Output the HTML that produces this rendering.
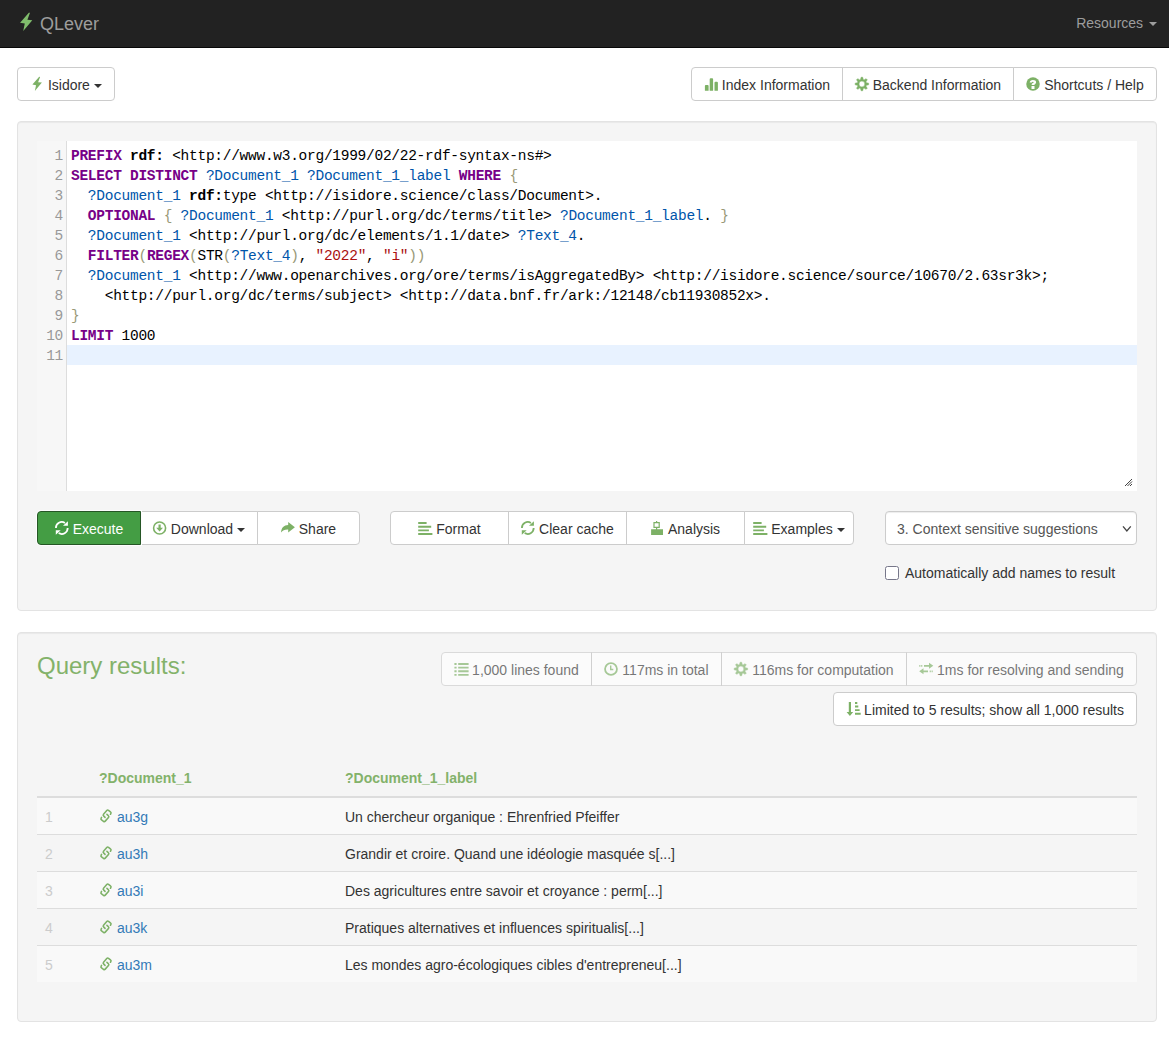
<!DOCTYPE html>
<html>
<head>
<meta charset="utf-8">
<title>QLever</title>
<style>
*{box-sizing:border-box;}
html,body{margin:0;padding:0;}
body{width:1169px;height:1038px;overflow:hidden;background:#fff;color:#333;font-family:"Liberation Sans",sans-serif;font-size:14px;line-height:20px;position:relative;}
.abs{position:absolute;}
.ic{display:inline-block;width:14px;height:14px;vertical-align:-1px;fill:currentColor;overflow:visible;}
/* navbar */
#nav{left:0;top:0;width:1169px;height:48px;background:#222;border-bottom:1px solid #080808;}
#brand{left:17px;top:14px;font-size:18px;line-height:20px;color:#9d9d9d;white-space:nowrap;}
#res{right:12px;top:13px;color:#9d9d9d;white-space:nowrap;}
.caret{display:inline-block;width:0;height:0;margin-left:2px;vertical-align:middle;border-top:4px solid;border-right:4px solid transparent;border-left:4px solid transparent;}
/* buttons */
.btn{display:inline-block;height:34px;padding:7px 12px 5px;border:1px solid #ccc;background:#fff;color:#333;font-size:14px;line-height:20px;text-align:center;white-space:nowrap;border-radius:4px;vertical-align:top;}
.grp{white-space:nowrap;font-size:0;}
.grp .btn{border-radius:0;margin-left:-1px;}
.grp .btn:first-child{border-radius:4px 0 0 4px;margin-left:0;}
.grp .btn:last-child{border-radius:0 4px 4px 0;}
.well{background:#f5f5f5;border:1px solid #e3e3e3;border-radius:4px;box-shadow:inset 0 1px 1px rgba(0,0,0,.05);}

.ic{color:#7db166;}
symbol{overflow:visible;}
.btn .caret{margin-left:0;}
.btn-success{background:#449d44;border-color:#255625;color:#fff;position:relative;z-index:2;box-shadow:0 0 0 1px #fdfdfd;}
.btn-success .ic{color:#fff;fill:#fff;}
.dis .btn{opacity:.65;}
/* editor */
#ed{left:37px;top:141px;width:1100px;height:350px;background:#fff;overflow:hidden;}
#gut{left:0;top:0;width:30px;height:350px;background:#f7f7f7;border-right:1px solid #ddd;}
#act{left:30px;top:204px;width:1070px;height:20px;background:#e8f2ff;}
#code,#lnum{font-family:"Liberation Mono",monospace;font-size:14.5px;line-height:20px;white-space:pre;margin:0;letter-spacing:-0.272px;}
#code{left:34px;top:5px;color:#000;}
#lnum{left:0;top:5px;width:26px;text-align:right;color:#999;}
.k{color:#708;font-weight:bold;}
.p{font-weight:bold;color:#000;}
.v{color:#05a;}
.b{color:#997;}
.s{color:#a11;}
/* select, checkbox */
#sel{left:885px;top:511px;width:252px;height:34px;border:1px solid #ccc;border-radius:4px;background:#fff;color:#555;padding:7px 11px 5px;box-shadow:inset 0 1px 1px rgba(0,0,0,.075);}
#cb{left:885.3px;top:566px;width:13.6px;height:13.6px;border:1px solid #77778a;border-radius:2.5px;background:#fff;}
/* table */
#tbl{left:37px;top:760px;width:1100px;border-collapse:separate;border-spacing:0;table-layout:fixed;}
#tbl th{text-align:left;padding:8px;height:38px;line-height:20px;border-bottom:2px solid #ddd;color:#83b26a;font-weight:bold;vertical-align:bottom;}
#tbl td{padding:9px 8px 7px;height:37px;line-height:20px;border-top:1px solid #ddd;vertical-align:top;white-space:nowrap;}
#tbl tr.o td{background:#f9f9f9;}
#tbl tr.f td{border-top:0;height:36px;}
#tbl td.n{color:#ccc;}
#tbl a{color:#337ab7;text-decoration:none;}
h3{margin:0;font-size:24px;line-height:26px;font-weight:normal;color:#83b26a;}
</style>
</head>
<body>
<svg width="0" height="0" style="position:absolute">
<defs>
<symbol id="i-flash" viewBox="0 0 14 14"><path d="M9.2 -0.2 L10.1 -0.1 L8.1 5.3 L11.9 5.55 L4.85 14 L6.05 8.25 L2.4 7.55 Z"/></symbol>
<symbol id="i-stats" viewBox="0 0 14 14"><path d="M0.9 13.8 V9 Q0.9 8.1 1.8 8.1 H3.7 Q4.6 8.1 4.6 9 V13.8 Z M5.7 13.8 V2.2 Q5.7 1.2 6.7 1.2 H8.1 Q9.1 1.2 9.1 2.2 V13.8 Z M10.5 13.8 V5.8 Q10.5 4.8 11.5 4.8 H12.9 Q13.9 4.8 13.9 5.8 V13.8 Z"/></symbol>
<symbol id="i-cog" viewBox="0 0 14 14"><path fill-rule="evenodd" stroke="currentColor" stroke-width="0.5" stroke-linejoin="round" d="M5.54 2.61 L6.09 0.25 L7.71 0.25 L8.26 2.61 L9.05 2.93 L11.10 1.65 L12.25 2.80 L10.97 4.85 L11.29 5.64 L13.65 6.19 L13.65 7.81 L11.29 8.36 L10.97 9.15 L12.25 11.20 L11.10 12.35 L9.05 11.07 L8.26 11.39 L7.71 13.75 L6.09 13.75 L5.54 11.39 L4.75 11.07 L2.70 12.35 L1.55 11.20 L2.83 9.15 L2.51 8.36 L0.15 7.81 L0.15 6.19 L2.51 5.64 L2.83 4.85 L1.55 2.80 L2.70 1.65 L4.75 2.93 Z M4.00 7.00 a2.90 2.90 0 1 0 5.80 0 a2.90 2.90 0 1 0 -5.80 0 Z"/></symbol>
<symbol id="i-question" viewBox="0 0 14 14"><circle cx="7" cy="7" r="6.75"/><path fill="#fff" d="M3.7 5.6 Q3.9 2.95 6.9 2.95 Q10.1 2.95 10.1 5.2 Q10.1 6.5 8.9 7.1 Q8.6 7.3 8.6 8 H5.6 Q5.6 6.6 6.8 6 Q7.7 5.6 7.7 5.2 Q7.7 4.7 6.9 4.7 Q6 4.7 5.9 5.6 Z M5.5 9.1 H8.5 V12 H5.5 Z"/></symbol>
<symbol id="i-refresh" viewBox="0 0 14 14"><path fill="none" stroke="currentColor" stroke-width="1.8" d="M0.9 6.9 A5.9 5.9 0 0 1 9.9 1.9 M12.7 7.1 A5.9 5.9 0 0 1 3.7 12.1"/><path fill="currentColor" d="M12.9 0.2 V4.8 H8 Z M0.8 13.8 V9.3 H5.7 Z"/></symbol>
<symbol id="i-download" viewBox="0 0 14 14"><circle cx="6.6" cy="7" r="6" fill="none" stroke="currentColor" stroke-width="1.6"/><path fill="currentColor" d="M5.5 3.6 H7.7 V6.8 H10 L6.6 10.4 L3.2 6.8 H5.5 Z"/></symbol>
<symbol id="i-share" viewBox="0 0 14 14"><path d="M7.2 1 L13.9 6.2 L7.2 11.4 V8.4 C4 8.2 1.6 9.3 0 11.6 C0.3 6.6 3 4.1 7.2 3.9 Z"/></symbol>
<symbol id="i-align" viewBox="0 0 14 14"><path d="M0.2 1.1 H8.6 V3 H0.2 Z M0.2 4.8 H13.2 V6.7 H0.2 Z M0.2 8.4 H10.9 V10.3 H0.2 Z M0.2 12 H14.4 V13.9 H0.2 Z"/></symbol>
<symbol id="i-analysis" viewBox="0 0 14 14"><path fill-rule="evenodd" d="M5 0 H6.2 V1 H8.8 V6.9 H6.2 V8.2 H12 V13.9 H0.1 V8.2 H5 V6.9 H2.4 V1 H5 Z M3.6 2.2 V5.7 H7.6 V2.2 Z"/></symbol>
<symbol id="i-list" viewBox="0 0 14 14"><path d="M0.4 1.1 H2.6 V3 H0.4 Z M4.2 1.1 H14.6 V3 H4.2 Z M0.4 4.7 H2.6 V6.6 H0.4 Z M4.2 4.7 H14.6 V6.6 H4.2 Z M0.4 8.3 H2.6 V10.2 H0.4 Z M4.2 8.3 H14.6 V10.2 H4.2 Z M0.4 11.9 H2.6 V13.8 H0.4 Z M4.2 11.9 H14.6 V13.8 H4.2 Z"/></symbol>
<symbol id="i-time" viewBox="0 0 14 14"><circle cx="7" cy="7" r="5.95" fill="none" stroke="currentColor" stroke-width="1.8"/><path fill="none" stroke="currentColor" stroke-width="1.4" d="M6.7 3.4 V7.5 H9.3"/></symbol>
<symbol id="i-transfer" viewBox="0 0 14 14"><path d="M0.3 2.9 H1.4 V4.7 H0.3 Z M2.2 2.9 H3.3 V4.7 H2.2 Z M5 2.9 H10 V0.8 L14.3 3.8 L10 6.8 V4.7 H5 Z M12.6 8.4 H13.7 V10.2 H12.6 Z M10.7 8.4 H11.8 V10.2 H10.7 Z M9 8.4 H4.5 V6.3 L0.2 9.3 L4.5 12.3 V10.2 H9 Z"/></symbol>
<symbol id="i-sort" viewBox="0 0 14 14"><path d="M2.8 0 H5 V10 H7.2 L3.9 14 L0.6 10 H2.8 Z M9 0.1 H11.3 V1.9 H9 Z M9 3.6 H12.3 V5.5 H9 Z M9 7.2 H13.6 V9.1 H9 Z M9 10.8 H14.7 V12.8 H9 Z"/></symbol>
<symbol id="i-link" viewBox="0 0 14 14"><g fill="none" stroke="currentColor" stroke-width="1.55" stroke-linecap="round"><path d="M6.05 8.36 L4.59 6.9 Q3.74 6.05 4.54 5.15 L7.75 1.56 Q8.55 0.66 9.51 1.38 L11.44 2.83 Q12.4 3.55 11.92 4.43 L11.45 5.28"/><path transform="rotate(180 7.0 6.85)" d="M6.05 8.36 L4.59 6.9 Q3.74 6.05 4.54 5.15 L7.75 1.56 Q8.55 0.66 9.51 1.38 L11.44 2.83 Q12.4 3.55 11.92 4.43 L11.45 5.28"/></g></symbol>
</defs>
</svg>

<div id="nav" class="abs">
  <div id="brand" class="abs"><svg class="ic abs" style="width:18px;height:18px;color:#80bd6c;left:0;top:-0.75px"><use href="#i-flash"/></svg><span style="padding-left:23px">QLever</span></div>
  <div id="res" class="abs">Resources <span class="caret"></span></div>
</div>

<div class="abs" style="left:17px;top:67px"><span class="btn"><svg class="ic"><use href="#i-flash"/></svg> Isidore <span class="caret"></span></span></div>

<div id="well1" class="abs well" style="left:17px;top:121px;width:1140px;height:490px"></div>
<div id="well2" class="abs well" style="left:17px;top:632px;width:1140px;height:390px"></div>

<div class="abs grp" style="left:691px;top:67px"><span class="btn" style="width:152px;padding-left:0;padding-right:0"><svg class="ic"><use href="#i-stats"/></svg> Index Information</span><span class="btn" style="width:172px;padding-left:0;padding-right:0"><svg class="ic"><use href="#i-cog"/></svg> Backend Information</span><span class="btn" style="width:144px;padding-left:0;padding-right:0"><svg class="ic"><use href="#i-question"/></svg> Shortcuts / Help</span></div>

<div id="ed" class="abs">
  <div id="gut" class="abs"></div>
  <div id="act" class="abs"></div>
<pre id="lnum" class="abs">1
2
3
4
5
6
7
8
9
10
11</pre>
<pre id="code" class="abs"><span class="k">PREFIX</span> <span class="p">rdf:</span> &lt;http://www.w3.org/1999/02/22-rdf-syntax-ns#&gt;
<span class="k">SELECT</span> <span class="k">DISTINCT</span> <span class="v">?Document_1</span> <span class="v">?Document_1_label</span> <span class="k">WHERE</span> <span class="b">{</span>
  <span class="v">?Document_1</span> <span class="p">rdf:</span>type &lt;http://isidore.science/class/Document&gt;.
  <span class="k">OPTIONAL</span> <span class="b">{</span> <span class="v">?Document_1</span> &lt;http://purl.org/dc/terms/title&gt; <span class="v">?Document_1_label</span>. <span class="b">}</span>
  <span class="v">?Document_1</span> &lt;http://purl.org/dc/elements/1.1/date&gt; <span class="v">?Text_4</span>.
  <span class="k">FILTER</span><span class="b">(</span><span class="k">REGEX</span><span class="b">(</span>STR<span class="b">(</span><span class="v">?Text_4</span><span class="b">)</span>, <span class="s">"2022"</span>, <span class="s">"i"</span><span class="b">))</span>
  <span class="v">?Document_1</span> &lt;http://www.openarchives.org/ore/terms/isAggregatedBy&gt; &lt;http://isidore.science/source/10670/2.63sr3k&gt;;
    &lt;http://purl.org/dc/terms/subject&gt; &lt;http://data.bnf.fr/ark:/12148/cb11930852x&gt;.
<span class="b">}</span>
<span class="k">LIMIT</span> 1000
</pre>
  <svg class="abs" style="left:1087px;top:337px" width="9" height="9" viewBox="0 0 9 9"><path d="M8 1 L1 8 M8 3.5 L3.5 8 M8 6 L6 8" stroke="#444" stroke-width="1" fill="none"/></svg>
</div>

<div class="abs grp" style="left:37px;top:511px"><span class="btn btn-success" style="width:104px;padding-left:0;padding-right:0"><svg class="ic"><use href="#i-refresh"/></svg> Execute</span><span class="btn" style="width:118px;padding-left:0;padding-right:0"><svg class="ic"><use href="#i-download"/></svg> Download <span class="caret"></span></span><span class="btn" style="width:103px;padding-left:0;padding-right:0"><svg class="ic"><use href="#i-share"/></svg> Share</span></div>

<div class="abs grp" style="left:390px;top:511px"><span class="btn" style="width:119px;padding-left:0;padding-right:0"><svg class="ic"><use href="#i-align"/></svg> Format</span><span class="btn" style="width:119px;padding-left:0;padding-right:0"><svg class="ic"><use href="#i-refresh"/></svg> Clear cache</span><span class="btn" style="width:119px;padding-left:0;padding-right:0"><svg class="ic"><use href="#i-analysis"/></svg> Analysis</span><span class="btn" style="width:110px;padding-left:0;padding-right:0"><svg class="ic"><use href="#i-align"/></svg> Examples <span class="caret"></span></span></div>

<div id="sel" class="abs">3. Context sensitive suggestions<svg class="abs" style="left:236px;top:13px" width="10" height="8" viewBox="0 0 10 8"><path d="M1 1.3 L4.85 5.9 L8.75 1.3" stroke="#444" stroke-width="1.3" fill="none"/></svg></div>
<div id="cb" class="abs"></div>
<div class="abs" style="left:905px;top:563px;white-space:nowrap">Automatically add names to result</div>

<h3 class="abs" style="left:37px;top:653px">Query results:</h3>

<div class="abs grp dis" style="left:441px;top:652px"><span class="btn" style="width:151px;padding-left:0;padding-right:0"><svg class="ic"><use href="#i-list"/></svg> 1,000 lines found</span><span class="btn" style="width:131px;padding-left:0;padding-right:0"><svg class="ic"><use href="#i-time"/></svg> 117ms in total</span><span class="btn" style="width:186px;padding-left:0;padding-right:0"><svg class="ic"><use href="#i-cog"/></svg> 116ms for computation</span><span class="btn" style="width:231px;padding-left:0;padding-right:0"><svg class="ic"><use href="#i-transfer"/></svg> 1ms for resolving and sending</span></div>

<div class="abs" style="right:32px;top:692px"><span class="btn"><svg class="ic"><use href="#i-sort"/></svg> Limited to 5 results; show all 1,000 results</span></div>

<table id="tbl" class="abs">
<colgroup><col style="width:54px"><col style="width:246px"><col></colgroup>
<thead><tr><th></th><th>?Document_1</th><th>?Document_1_label</th></tr></thead>
<tbody>
<tr class="o f"><td class="n">1</td><td><svg class="ic"><use href="#i-link"/></svg> <a>au3g</a></td><td>Un chercheur organique : Ehrenfried Pfeiffer</td></tr>
<tr><td class="n">2</td><td><svg class="ic"><use href="#i-link"/></svg> <a>au3h</a></td><td>Grandir et croire. Quand une id&eacute;ologie masqu&eacute;e s[...]</td></tr>
<tr class="o"><td class="n">3</td><td><svg class="ic"><use href="#i-link"/></svg> <a>au3i</a></td><td>Des agricultures entre savoir et croyance : perm[...]</td></tr>
<tr><td class="n">4</td><td><svg class="ic"><use href="#i-link"/></svg> <a>au3k</a></td><td>Pratiques alternatives et influences spiritualis[...]</td></tr>
<tr class="o"><td class="n">5</td><td><svg class="ic"><use href="#i-link"/></svg> <a>au3m</a></td><td>Les mondes agro-&eacute;cologiques cibles d'entrepreneu[...]</td></tr>
</tbody>
</table>

</body>
</html>
